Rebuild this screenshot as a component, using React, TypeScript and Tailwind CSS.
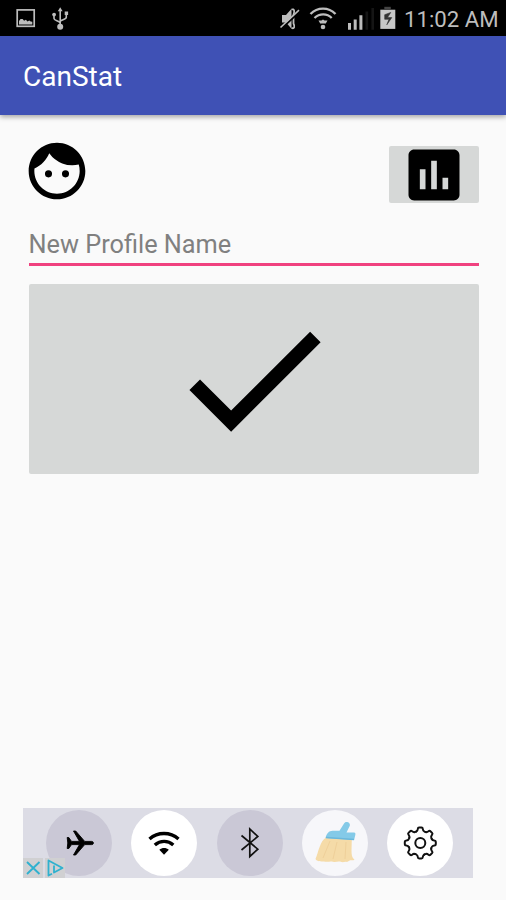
import { MdAssessment, MdCheck, MdFace } from "react-icons/md"

const GEAR_TEETH = [0, 45, 90, 135, 180, 225, 270, 315]

function StatusBar() {
    return (
        <div className="h-9 bg-black flex justify-between text-[#bdbdbd]">
            <svg className="w-[80px] h-9" viewBox="0 0 80 36" fill="none" stroke="currentColor">
                <rect x="17.2" y="9.9" width="17" height="16.4" strokeWidth="1.7" />
                <path d="M19 24.5v-3.6l1.6-2 2 .2 1.5 1.6 1.8-.9 1.6 1.6 1.8-1 1.4 1.2 1.6.1v2.8z" fill="currentColor" stroke="none" />
                <path d="M60.2 10v17M54 15v3.6c0 2.4 6.2 2 6.2 5M66.3 14v3.2c0 2.8-6.1 2.2-6.1 4.6" strokeWidth="1.6" />
                <path d="M60.2 7.2l2.4 4h-4.8zM64.7 11.6h3.4V15h-3.4z" fill="currentColor" stroke="none" />
                <circle cx="54.1" cy="14.6" r="1.9" fill="currentColor" stroke="none" />
                <circle cx="60.2" cy="26.8" r="3" fill="currentColor" stroke="none" />
            </svg>
            <div className="flex pr-2">
                <svg className="w-[124px] h-9" viewBox="276 0 124 36" fill="none" stroke="currentColor">
                    {/* muted speaker */}
                    <path d="M282 15h4l5.5-6.2v20L286 22.5h-4z" fill="currentColor" stroke="none" />
                    <path d="M291.5 9.5c3-1 3.3 2 2 5v9c1.5 3 1 5.5-2 4.5" strokeWidth="1.8" />
                    <path d="M281.5 28.5L300 11.2" stroke="#000" strokeWidth="2" />
                    <path d="M280.5 27.5L299 10.2" strokeWidth="1.6" />
                    {/* wifi */}
                    <path d="M310.5 14c7-7.2 18-7.2 25 0" strokeWidth="2.4" />
                    <path d="M314.5 18c5-4.8 12.5-4.8 17.2 0" strokeWidth="2.3" />
                    <path d="M318.5 20.6h3l1.5-1.1 1.5 1.1h3l-1.7 3h-5.6z" fill="currentColor" stroke="none" />
                    <circle cx="323" cy="27" r="2.3" fill="currentColor" stroke="none" />
                    {/* signal */}
                    <path d="M349.5 23v6.8M355.2 19.5v10.3M360.9 15.3v14.5" strokeWidth="3" />
                    <path d="M366.8 11.5v18.3M372.7 8v21.8" stroke="#151515" strokeWidth="2.6" />
                    {/* charging battery */}
                    <path d="M380.3 9.7h15v19.2h-15z" fill="#c8c8c8" stroke="none" />
                    <path d="M384.3 6.8h6.5v2.7h-6.5z" fill="#444" stroke="none" />
                    <path d="M390.7 12.5l-6 2.2v4.6h4.3l-2.2 5.5 5-7.2h-4.3z" fill="#333" stroke="#333" strokeWidth=".6" />
                </svg>
                <span className="w-[98px] pl-1 pt-[2px] text-[22.2px] leading-[34px] whitespace-nowrap">11:02 AM</span>
            </div>
        </div>
    )
}

function BroomIcon() {
    return (
        <svg className="size-[66px]" viewBox="0 0 66 66">
            <path d="M24 27.5c-6 3.5-7.5 14.5-10.5 21.5 1.5 3 5.5 2.2 8.5 2.5 3.5.8 6-.7 9 .2 3 .7 5-.8 8.5.3 2 .6 3.5-1 5.5 0l2.3-1.3c1.2-1 3.7.2 5.2-1-2.6-2-3-5-3-9.5l.3-11z" fill="#f5dba8" />
            <path d="M28 31l-7 17M35 32l-4 17M44 32l-1 17" stroke="#efd09a" strokeWidth="1" fill="none" />
            <path d="M23.5 28c1-4.5 3.5-7.3 7-7.3h7l4.7-7.5c1.8-2.7 6.6-.7 5.6 2.5l-3.3 6.8h7.5c1.5 0 1.6 1.4 1.3 2.5l-1.2 5z" fill="#84cae8" />
            <path d="M24 27.5l28 2" stroke="#6bb8dc" strokeWidth="1.5" />
        </svg>
    )
}

function AdBanner() {
    return (
        <div className="relative w-[450px] h-[70px] ml-[23px] bg-[#dcdce5] flex items-center gap-[19.3px] pl-[23px]">
            <div className="size-[66px] rounded-full bg-[#cac8d6]">
                <svg className="size-[66px]" viewBox="0 0 66 66">
                    <path
                        d="M21.2 27.5h1.6l2.7 3.9h8L27.5 21h2.2l9 10.4h7c2.3 0 2.3 3.2 0 3.2h-7l-9 10.4h-2.2l6-10.4h-8l-2.7 3.9h-1.6l.6-5.5z"
                        stroke="#000"
                        strokeWidth=".9"
                        strokeLinejoin="round"
                    />
                </svg>
            </div>
            <div className="size-[66px] rounded-full bg-white">
                <svg className="size-[66px]" viewBox="0 0 66 66" fill="none" stroke="#000" strokeWidth="3.4">
                    <path d="M18.5 29c8.3-7.3 20.7-7.3 29 0" />
                    <path d="M23.8 35c5.5-4.8 13.2-4.8 18.5 0" />
                    <path d="M28.3 39.7c2.8-2.3 6.8-2.3 9.5 0L33 44.7z" fill="#000" stroke="none" />
                </svg>
            </div>
            <div className="size-[66px] rounded-full bg-[#cac8d6]">
                <svg className="size-[66px]" viewBox="0 0 66 66" fill="none" stroke="#111" strokeWidth="1.7">
                    <path d="M24.5 25.5l16.3 13.7-8 7.3V19l8 7.5L24.5 40" />
                </svg>
            </div>
            <div className="size-[66px] rounded-full bg-[#f7f7fa]">
                <BroomIcon />
            </div>
            <div className="size-[66px] rounded-full bg-white">
                <svg className="size-[66px]" viewBox="-33.3 -33 66 66" fill="none" stroke="#111" strokeWidth="2" strokeLinejoin="round" strokeLinecap="round">
                    <circle r="5" />
                    {GEAR_TEETH.map((angle) => (
                        <path
                            key={angle}
                            transform={`rotate(${angle})`}
                            d="M-3.9-11.6Q-2.7-12.1-2.5-14Q-2.4-15.5-1.2-15.5H1.2Q2.4-15.5 2.5-14Q2.7-12.1 3.9-11.6Q4.7-10.8 5.45-10.96"
                        />
                    ))}
                </svg>
            </div>
            <div className="absolute left-0 bottom-0 flex gap-[2px]">
                <svg className="w-5 h-5 bg-[#d0d0d2]" viewBox="0 0 20 20" fill="none" stroke="#2fb1cf" strokeWidth="1.9">
                    <path d="M4 4l12.5 12M16.5 4L4 16" />
                </svg>
                <svg className="w-5 h-5 bg-[#d0d0d2]" viewBox="0 0 20 20" fill="none" stroke="#2fb1cf" strokeWidth="1.8" strokeLinejoin="round">
                    <path d="M7 15.7l-3.5 1.8V2.5L17.5 10 9 14.5V7.5" />
                </svg>
            </div>
        </div>
    )
}

export default function App() {
    return (
        <div className="w-[506px] h-[900px] bg-[#fafafa] overflow-hidden flex flex-col font-[Roboto,sans-serif]">
            <StatusBar />
            <header className="relative h-[79px] shrink-0 bg-[#3f51b5] pl-[23px] pt-[3px] flex items-center shadow-[0_2px_5px_rgba(0,0,0,0.35)]">
                <h1 className="text-[28px] text-white">CanStat</h1>
            </header>
            <main className="flex-1 pl-[28.5px] pr-[27.5px]">
                <div className="flex justify-between items-start pt-[22px] h-[104px]">
                    <MdFace className="size-[68px] -ml-[6px] text-black" />
                    <button className="mt-[9px] w-[90px] h-[57px] rounded-[2px] bg-[#d6d8d7] flex justify-center items-center">
                        <MdAssessment className="size-[68px] shrink-0 text-black" />
                    </button>
                </div>
                <input
                    className="block w-full h-[47px] pt-[7px] border-b-3 border-[#f0417f] text-[25.3px] placeholder:text-[#808080] outline-none"
                    placeholder="New Profile Name"
                />
                <button className="mt-[18px] w-full h-[190px] rounded-[2px] bg-[#d6d8d7] flex justify-center items-center">
                    <MdCheck className="size-[179px] text-black" />
                </button>
            </main>
            <footer className="h-[92px] shrink-0">
                <AdBanner />
            </footer>
        </div>
    )
}
